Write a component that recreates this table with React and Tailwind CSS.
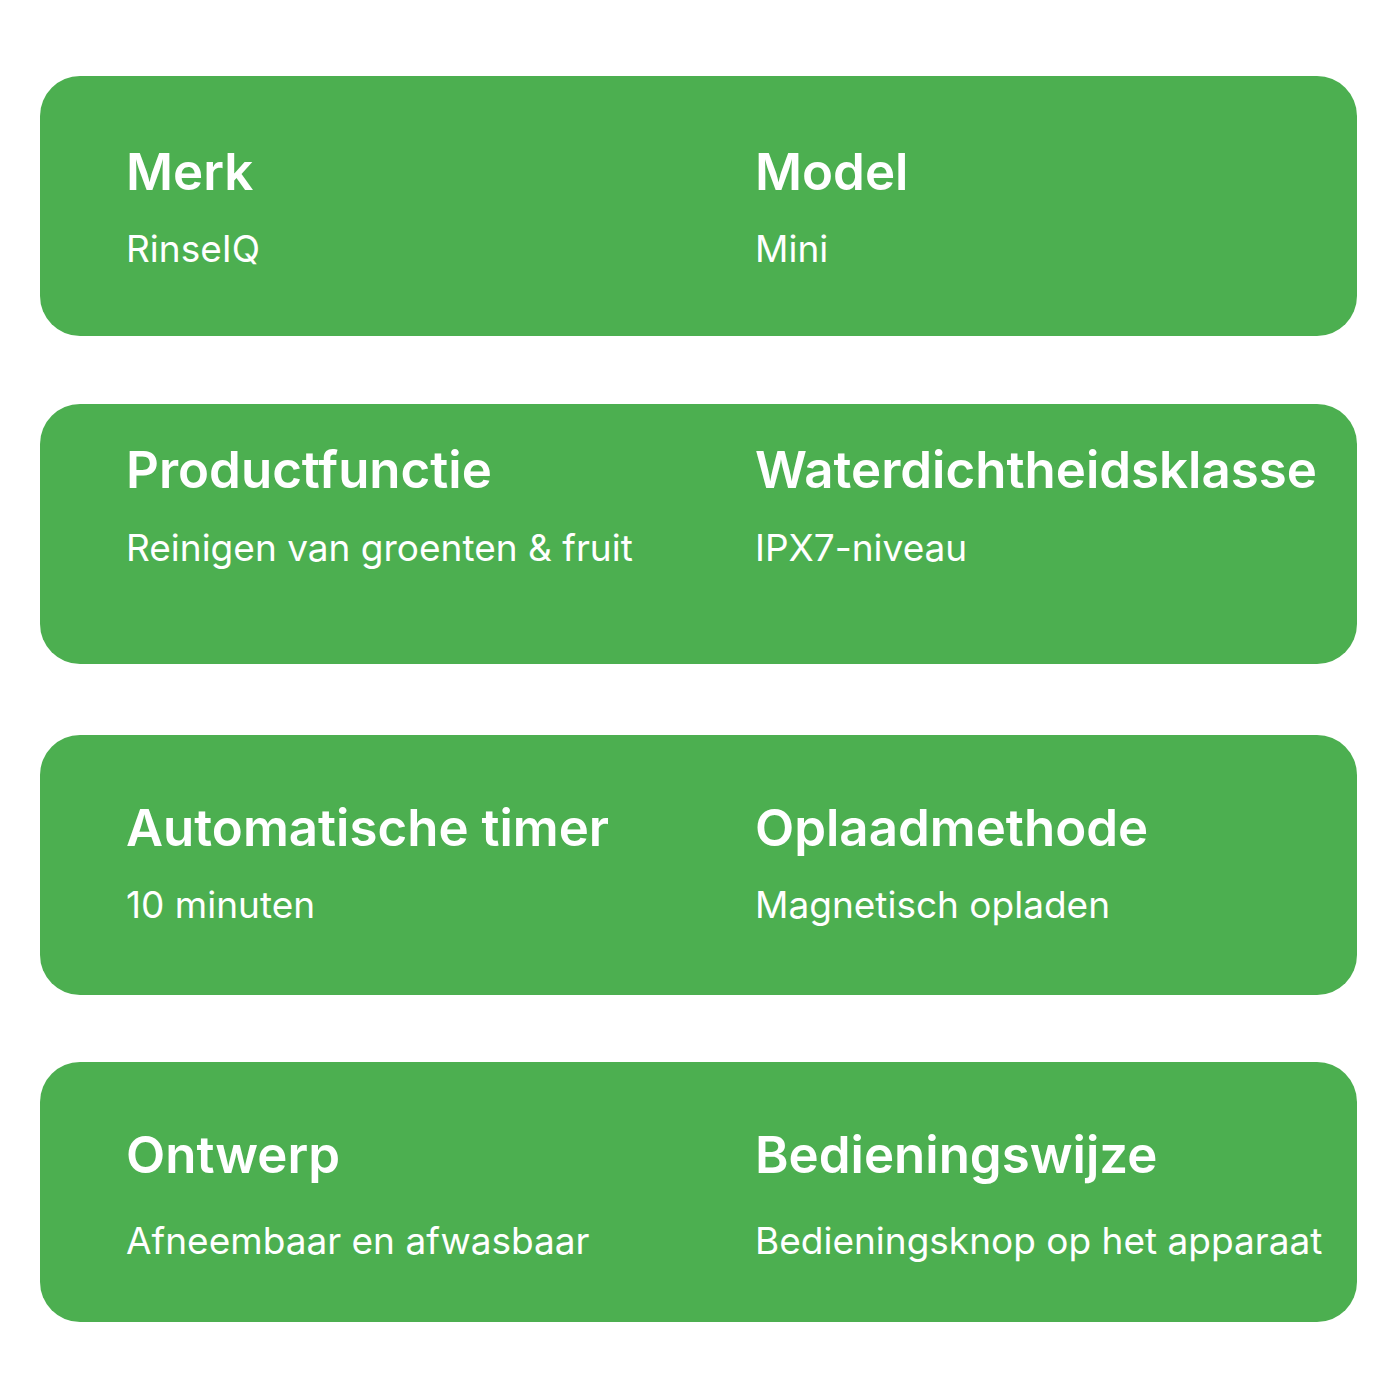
export default function App() {
  const rows = [
    { mt: "mt-[76px]", pt: "pt-[66px]", vm: "mt-[23px]", d: [["Merk", "RinseIQ"], ["Model", "Mini"]] },
    { mt: "mt-[68px]", pt: "pt-[36px]", vm: "mt-[24px]", d: [["Productfunctie", "Reinigen van groenten & fruit"], ["Waterdichtheidsklasse", "IPX7-niveau"]] },
    { mt: "mt-[71px]", pt: "pt-[63px]", vm: "mt-[23px]", d: [["Automatische timer", "10 minuten"], ["Oplaadmethode", "Magnetisch opladen"]] },
    { mt: "mt-[67px]", pt: "pt-[63px]", vm: "mt-[32px]", d: [["Ontwerp", "Afneembaar en afwasbaar"], ["Bedieningswijze", "Bedieningsknop op het apparaat"]] },
  ];
  return (
    <div className="w-[1400px] h-[1400px] bg-white flex flex-col pl-[40px]" style={{ fontFamily: "Inter, sans-serif" }}>
      {rows.map((r, i) => (
        <div key={i} className={`${r.mt} ${r.pt} w-[1317px] h-[260px] rounded-[40px] bg-[#4caf50] flex pl-[86px] text-white`}>
          {r.d.map(([t, v], j) => (
            <div key={j} className={j === 0 ? "w-[629px] shrink-0" : "whitespace-nowrap"}>
              <div className="text-[51px] leading-[60px] font-semibold">{t}</div>
              <div className={`text-[37px] leading-[48px] ${r.vm}`}>{v}</div>
            </div>
          ))}
        </div>
      ))}
    </div>
  );
}
